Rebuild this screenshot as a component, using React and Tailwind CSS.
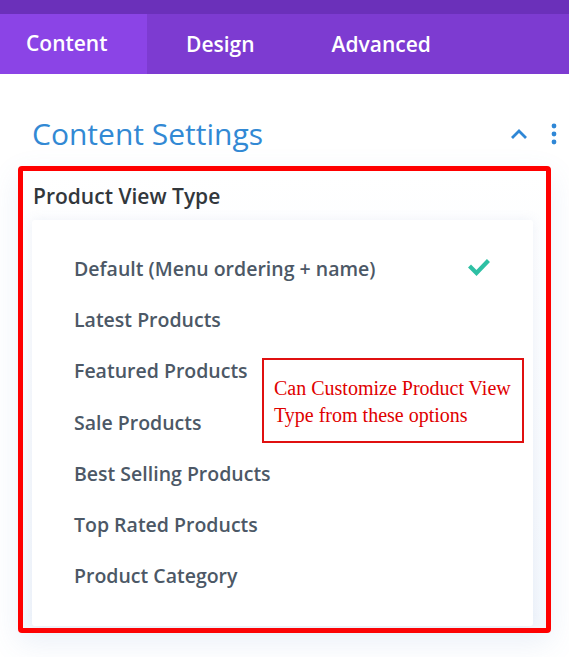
import React from 'react';

const options = [
  'Default (Menu ordering + name)',
  'Latest Products',
  'Featured Products',
  'Sale Products',
  'Best Selling Products',
  'Top Rated Products',
  'Product Category',
];

function Check() {
  return (
    <svg width="22" height="18" viewBox="0 0 22 18" fill="none">
      <path d="M3 9.5l5.5 5.5L19 4" stroke="#2ec0a4" strokeWidth="4.2" strokeLinecap="square" />
    </svg>
  );
}

export default function App() {
  return (
    <div className="w-[569px] h-[657px] overflow-hidden bg-white font-['Open_Sans',sans-serif]">
      {/* tabs */}
      <div className="h-[14px] bg-[#6b30ba]" />
      <div className="flex h-[60px] bg-[#7d3bd1] text-white text-[21px] font-semibold pt-[1px]">
        <div className="flex items-center pl-[26px] w-[147px] bg-[#8b44e6] -mt-[1px]">Content</div>
        <div className="flex items-center pl-[39px] pr-[38px]">Design</div>
        <div className="flex items-center px-[39px]">Advanced</div>
      </div>

      {/* heading */}
      <div className="flex items-center justify-between pl-[32px] pr-[12px] pt-[26px] h-[94px]">
        <h2 className="text-[30px] text-[#3289d4] leading-none">Content Settings</h2>
        <div className="flex items-center gap-[22px]">
          <svg width="20" height="14" viewBox="0 0 20 14" fill="none">
            <path d="M3 11l7-7 7 7" stroke="#2f87d6" strokeWidth="2.8" />
          </svg>
          <svg width="6" height="22" viewBox="0 0 6 22">
            <circle cx="3" cy="3" r="2.4" fill="#2f87d6" />
            <circle cx="3" cy="11" r="2.4" fill="#2f87d6" />
            <circle cx="3" cy="19" r="2.4" fill="#2f87d6" />
          </svg>
        </div>
      </div>

      {/* highlighted field */}
      <div className="relative mx-[18px] mt-[-2px] h-[467px] border-[5px] border-[#ff0000] rounded-[4px] bg-gradient-to-b from-white to-[#f3f7fc] shadow-[0_10px_30px_rgba(90,130,200,0.12)]">
        <div className="pl-[10px] pt-[12px] text-[21px] font-semibold text-[#32373c] leading-[26px]">Product View Type</div>
        <div className="ml-[9px] mr-[13px] mt-[11px] h-[406px] bg-white rounded-[3px] pt-[23px] shadow-[0_0_12px_rgba(120,150,200,0.12)]">
          {options.map((o, i) => (
            <div key={o} className="flex items-center justify-between h-[51.2px] pl-[42px] pr-[43px] text-[19.5px] font-semibold text-[#4c5866]">
              <span>{o}</span>
              {i === 0 && <span className="-mt-[4px]"><Check /></span>}
            </div>
          ))}
        </div>

        <div className="absolute left-[239px] top-[187px] w-[262px] h-[85px] border-2 border-[#e01010] pl-[10px] pt-[15px] font-['Liberation_Serif',serif] text-[20px] leading-[27px] text-[#e00000]">
          Can Customize Product View<br />Type from these options
        </div>
      </div>
    </div>
  );
}
